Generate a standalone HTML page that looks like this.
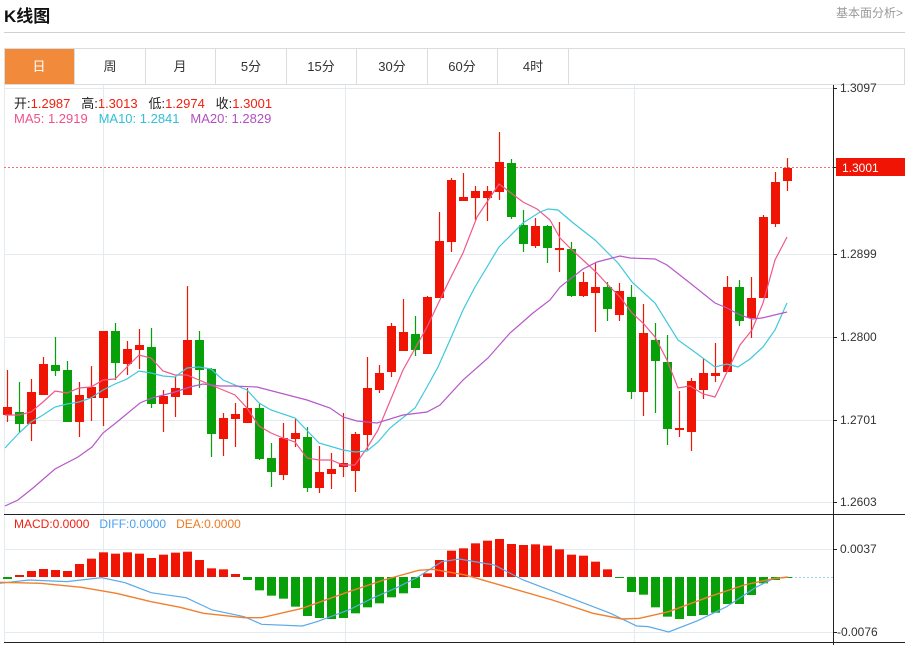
<!DOCTYPE html>
<html><head><meta charset="utf-8">
<style>
html,body{margin:0;padding:0;background:#fff;width:908px;height:645px;overflow:hidden;font-family:"Liberation Sans","Noto Sans CJK SC",sans-serif;}
.t{position:absolute;white-space:nowrap;}
</style></head><body>
<div class="t" style="left:4px;top:2px;font-size:17px;font-weight:bold;color:#111;">K线图</div>
<div class="t" style="left:836px;top:4px;font-size:12px;color:#999;">基本面分析&gt;</div>
<div style="position:absolute;left:4px;top:32px;width:901px;height:1px;background:#d0d0d0"></div>
<svg width="908" height="645" style="position:absolute;left:0;top:0" id="s">
<!-- tabs -->
<rect x="4.5" y="48.5" width="900" height="36" fill="#fff" stroke="#dcdcdc"/>
<rect x="5" y="49" width="69" height="35" fill="#f28a3c"/>
<g stroke="#dcdcdc"><line x1="74.5" y1="49" x2="74.5" y2="84"/><line x1="145.5" y1="49" x2="145.5" y2="84"/><line x1="215.5" y1="49" x2="215.5" y2="84"/><line x1="286.5" y1="49" x2="286.5" y2="84"/><line x1="356.5" y1="49" x2="356.5" y2="84"/><line x1="427.5" y1="49" x2="427.5" y2="84"/><line x1="497.5" y1="49" x2="497.5" y2="84"/><line x1="568.5" y1="49" x2="568.5" y2="84"/></g>
<g font-size="13" text-anchor="middle" fill="#333" font-family="Liberation Sans, Noto Sans CJK SC, sans-serif">
<text x="39" y="71" fill="#fff">日</text><text x="110" y="71">周</text><text x="180" y="71">月</text><text x="251" y="71">5分</text><text x="321" y="71">15分</text><text x="392" y="71">30分</text><text x="462" y="71">60分</text><text x="533" y="71">4时</text></g>
<!-- grid -->
<g stroke="#e3ebf1" stroke-width="1">
<line x1="4" y1="88.5" x2="833" y2="88.5"/><line x1="4" y1="254.5" x2="833" y2="254.5"/><line x1="4" y1="337.5" x2="833" y2="337.5"/><line x1="4" y1="420.5" x2="833" y2="420.5"/><line x1="4" y1="502.5" x2="833" y2="502.5"/>
<line x1="4" y1="549.5" x2="833" y2="549.5"/><line x1="4" y1="632.5" x2="833" y2="632.5"/>
<line x1="103.5" y1="85" x2="103.5" y2="642"/><line x1="345.5" y1="85" x2="345.5" y2="642"/><line x1="634.5" y1="85" x2="634.5" y2="642"/>
<line x1="4.5" y1="85" x2="4.5" y2="642"/>
</g>
<line x1="4" y1="514.5" x2="905" y2="514.5" stroke="#222"/>
<line x1="4" y1="642.5" x2="905" y2="642.5" stroke="#222"/>
<line x1="833.5" y1="85" x2="833.5" y2="645" stroke="#222"/>
<g stroke="#222"><line x1="833" y1="88.5" x2="837" y2="88.5"/><line x1="833" y1="254.5" x2="837" y2="254.5"/><line x1="833" y1="337.5" x2="837" y2="337.5"/><line x1="833" y1="420.5" x2="837" y2="420.5"/><line x1="833" y1="502.5" x2="837" y2="502.5"/><line x1="833" y1="549.5" x2="837" y2="549.5"/><line x1="833" y1="632.5" x2="837" y2="632.5"/><line x1="833" y1="167.5" x2="837" y2="167.5"/></g>
<g font-size="12" fill="#333" font-family="Liberation Sans, sans-serif">
<text x="840" y="92">1.3097</text><text x="840" y="258">1.2899</text><text x="840" y="341">1.2800</text><text x="840" y="424">1.2701</text><text x="840" y="506">1.2603</text>
<text x="840" y="553">0.0037</text><text x="837" y="636">-0.0076</text></g>
<line x1="4" y1="167.5" x2="833" y2="167.5" stroke="#f07070" stroke-dasharray="2,2"/>
<rect x="836" y="158" width="69" height="18" fill="#f01404"/>
<text x="842" y="172" font-size="12" fill="#fff" font-family="Liberation Sans, sans-serif">1.3001</text>
<line x1="787" y1="577.5" x2="833" y2="577.5" stroke="#9cd0ec" stroke-dasharray="2,2"/>
<g id="c"></g>
<!-- MA lines -->
<g fill="none" stroke-width="1.2">
<polyline stroke="#f0588a" points="5,415 19,415 31,412 43,402 55,391 67,393 79,388 91,387 103,380 115,379 127,367 139,355 151,358 163,371 175,375 187,375 199,380 211,385 223,390 235,395 247,408 259,426 271,433 283,438 295,442 307,458 319,460 331,460 343,465 355,465 367,448 378,430 403,370 427,327 448,283 463,253 477,217 499,184 523,202 537,209 550,220 560,238 572,250 583,260 597,273 608,285 620,297 632,313 643,323 655,337 667,360 678,388 690,386 703,394 715,397 727,372 740,345 752,330 763,303 775,260 787,237"/>
<polyline stroke="#3ec8dc" points="5,448 19,433 31,422 43,415 55,407 67,404 79,402 91,398 103,390 115,384 127,379 139,371 151,373 163,376 175,377 187,368 199,367 211,369 223,380 235,385 247,390 259,403 271,410 295,418 319,443 343,450 355,452 367,451 378,442 390,428 415,408 427,387 438,367 450,340 463,310 475,287 499,247 523,223 540,212 548,209 558,210 572,222 595,240 618,263 632,282 655,303 678,340 692,350 715,367 727,364 738,367 750,359 763,347 775,330 787,303"/>
<polyline stroke="#b658c8" points="5,506 18,500 33,488 55,469 78,457 92,447 103,433 117,422 140,403 152,398 175,392 190,387 203,384 220,386 233,386 257,387 280,393 307,400 330,408 343,417 357,421 377,423 403,415 427,412 440,405 463,380 488,358 510,333 533,313 550,300 560,287 583,269 597,262 620,256 630,258 655,259 667,265 690,283 715,303 727,308 740,315 752,319 762,318 787,312"/>
</g>
<g id="m"></g>
<g transform="translate(0,500) scale(0.5814,0.3333)" fill="none">
<polyline vector-effect="non-scaling-stroke" stroke="#5aaae8" stroke-width="1.2" points="0,250 50,240 115,245 175,233 215,248 260,278 320,293 365,330 420,350 450,373 520,378 545,365 600,330 640,295 680,265 720,230 760,185 790,177 850,195 900,240 990,300 1050,340 1095,378 1115,380 1150,396 1200,362 1250,320 1300,262 1330,236 1355,232"/>
<polyline vector-effect="non-scaling-stroke" stroke="#f08030" stroke-width="1.4" points="0,247 70,250 140,262 200,280 260,305 310,322 350,340 420,353 450,353 520,325 600,275 660,240 720,211 745,208 800,225 870,260 950,300 1020,340 1070,357 1100,355 1150,335 1220,290 1280,255 1330,236 1355,231"/>
</g>
</svg>
<div class="t" style="left:14px;top:93px;font-size:13px;color:#222;">开:<span style="color:#f02010">1.2987</span>&nbsp;&nbsp; 高:<span style="color:#f02010">1.3013</span>&nbsp;&nbsp; 低:<span style="color:#f02010">1.2974</span>&nbsp;&nbsp; 收:<span style="color:#f02010">1.3001</span></div>
<div class="t" style="left:14px;top:111px;font-size:13px;"><span style="color:#f0508a">MA5: 1.2919</span>&nbsp;&nbsp; <span style="color:#30c0d8">MA10: 1.2841</span>&nbsp;&nbsp; <span style="color:#b050c0">MA20: 1.2829</span></div>
<div class="t" style="left:14px;top:517px;font-size:12px;"><span style="color:#f02010">MACD:0.0000</span>&nbsp;&nbsp; <span style="color:#4aa0f0">DIFF:0.0000</span>&nbsp;&nbsp; <span style="color:#f07820">DEA:0.0000</span></div>
<script>
var C=[[370,422,407,415,1],[382,433,412,424,0],[379,441,392,424,1],[357,395,364,395,1],[337,376,365,371,0],[361,422,370,422,0],[382,437,395,422,1],[366,421,387,398,1],[331,426,331,398,1],[323,380,331,363,0],[341,375,349,364,1],[329,369,345,350,1],[328,408,347,404,0],[390,432,396,404,1],[377,417,388,397,1],[286,395,340,395,1],[331,388,340,370,0],[368,457,369,434,0],[413,456,418,439,1],[403,447,414,419,1],[388,423,408,423,1],[403,460,408,459,0],[443,487,458,472,0],[423,480,438,475,1],[419,447,433,439,1],[427,492,437,488,0],[446,493,472,488,1],[453,489,469,474,1],[413,477,463,467,1],[432,492,434,471,1],[357,450,388,435,1],[365,393,373,390,1],[323,377,326,372,1],[299,351,332,351,1],[316,356,334,350,0],[296,354,297,354,1],[212,298,241,298,1],[178,252,180,242,1],[173,201,197,201,1],[186,220,191,198,1],[186,221,191,198,1],[132,200,162,192,1],[159,219,163,217,0],[210,252,225,244,0],[218,248,226,246,1],[225,263,226,248,0],[222,272,248,250,1],[242,297,249,296,0],[272,297,282,296,1],[263,332,287,293,1],[282,321,287,309,0],[283,321,291,315,1],[285,399,297,392,0],[304,416,333,392,1],[323,413,340,361,0],[335,445,362,429,0],[391,437,428,430,1],[378,451,381,432,1],[359,399,373,390,1],[343,382,373,376,1],[276,372,287,372,1],[280,326,287,321,0],[277,338,298,318,1],[215,298,217,298,1],[172,227,182,224,1],[158,191,168,181,1]];
var M=[-2,225,213,207,210,213,192,176,157,161,157,161,174,164,158,155,180,205,208,222,240,271,287,296,320,348,354,357,354,340,322,310,292,280,264,220,180,152,145,130,122,117,132,135,133,137,148,164,167,185,208,232,276,284,322,350,357,348,345,338,312,312,285,250,240,232];
var ns="http://www.w3.org/2000/svg",g=document.getElementById('c'),m=document.getElementById('m'),h='';
C.forEach(function(c,i){var x=7.5+12*i,col=c[4]?'#f01404':'#08a008';
h+='<line x1="'+x+'" y1="'+c[0]+'" x2="'+x+'" y2="'+c[1]+'" stroke="'+col+'" stroke-width="1.2"/>';
var bh=Math.max(2,c[3]-c[2]);h+='<rect x="'+(x-4.5)+'" y="'+c[2]+'" width="9" height="'+bh+'" fill="'+col+'"/>';});
g.innerHTML=h;h='';
M.forEach(function(v,i){var x=7.5+12*i-4.5,y;if(v<0){h+='<rect x="'+x+'" y="577" width="9" height="2" fill="#08a008"/>';return;}
y=500+v/3;var col=(i<=19||(i>=35&&i<=50))?'#f01404':'#08a008';if(i==0||i==20||i==51)col='#08a008';if(i>=1&&i<=19)col='#f01404';
if(col=='#f01404'){h+='<rect x="'+x+'" y="'+y+'" width="9" height="'+Math.max(1,577-y)+'" fill="'+col+'"/>';}
else{h+='<rect x="'+x+'" y="577" width="9" height="'+Math.max(1,y-577)+'" fill="'+col+'"/>';}});
m.innerHTML=h;
</script>
</body></html>
